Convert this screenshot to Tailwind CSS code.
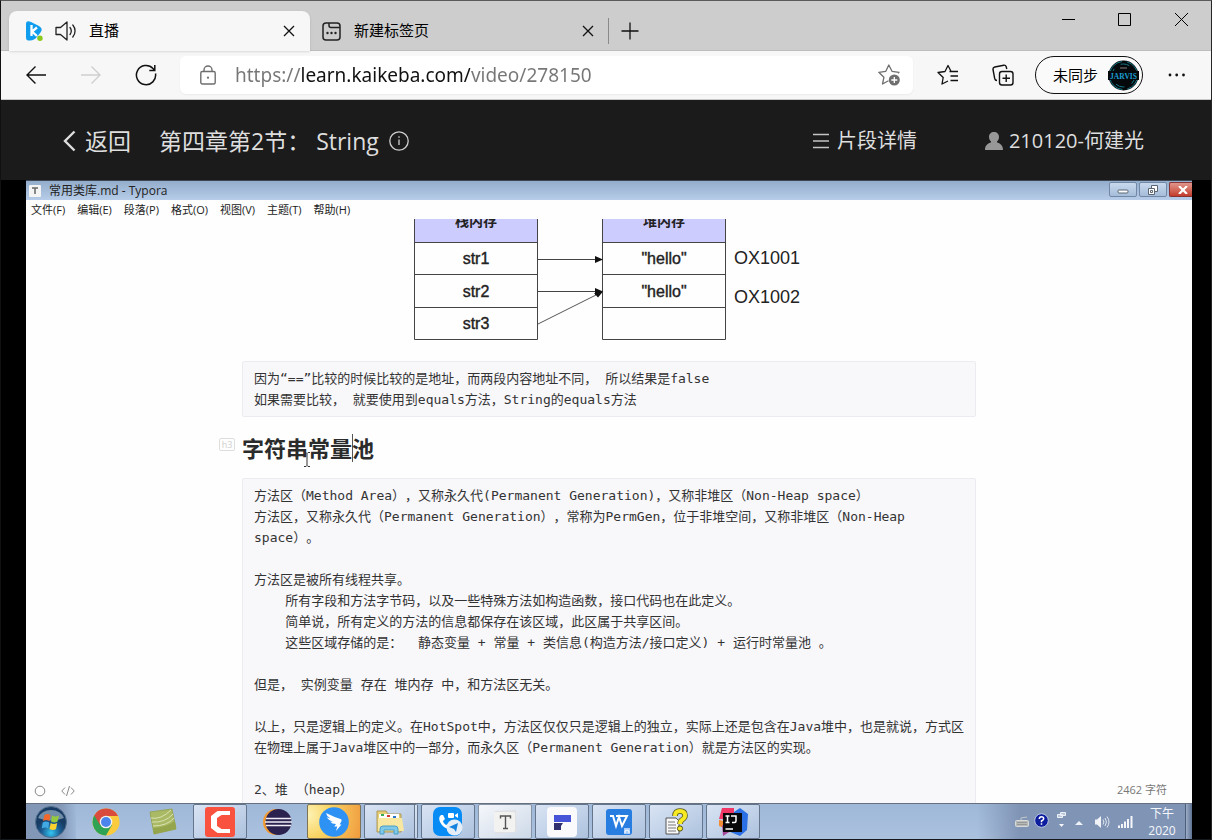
<!DOCTYPE html>
<html lang="zh-CN">
<head>
<meta charset="utf-8">
<title>直播</title>
<script src="https://cdn.jsdelivr.net/npm/@tailwindcss/browser@4"></script>
</head>
<body class="flex h-screen flex-col overflow-hidden border border-t-[#5b595b] border-r-[#262626] border-b-[#15181d] border-l-[#111] bg-black font-['Open_Sans','Noto_Sans_CJK_SC',sans-serif] text-black">

<!-- Tab strip -->
<header class="flex h-[50px] shrink-0 border-b border-[#bdbdbd] bg-[#cdcdcd]">
  <div class="relative mt-[10px] ml-2 flex h-10 w-[301px] shrink-0 items-center rounded-t-lg bg-[#f7f7f7] pr-[15px] pl-4 shadow-sm">
    <svg class="h-5 w-[18px]" viewBox="0 0 18 20"><path d="M1 3c0-3 2-3.300 5-2l7 3.500c4 2 4.500 4 2.500 7L12 16c-2 2-4 3.500-7 3.500S1 19 1 16z" fill="#109dee"/><path d="M6.500 4v11M12 6.500l-5 4 5 4.500" fill="none" stroke="#fff" stroke-width="2.300"/><circle cx="15" cy="17.300" r="2.700" fill="#8bc91c"/></svg>
    <svg class="ml-3 h-5 w-[22px]" viewBox="0 0 22 20" fill="none" stroke="#222" stroke-width="1.300" stroke-linejoin="round" stroke-linecap="round"><path d="M1 6.500h4.500L12 1v18l-6.500-5.500H1zM15 6.500c1.500 2 1.500 5 0 7M17.800 4c3 3.500 3 8.500 0 12"/></svg>
    <span class="ml-3 pb-[2px] text-[15px] leading-5">直播</span>
    <button aria-label="关闭直播" class="ml-auto"><svg class="size-3" viewBox="0 0 12 12" stroke="#111" stroke-width="1.300"><path d="M1 1l10 10M11 1L1 11"/></svg></button>
  </div>
  <div class="flex w-[298px] shrink-0 items-center border-r border-transparent pt-[11px] pr-[13px] pl-3">
    <svg class="size-[19px]" viewBox="0 0 19 19" fill="none" stroke="#222" stroke-width="1.500"><rect x="1" y="1" width="17" height="17" rx="3"/><path d="M7 1v2.500C7 5 7.500 5.500 9 5.500h9"/><g fill="#222" stroke="none"><circle cx="5.500" cy="11" r="1.200"/><circle cx="9.500" cy="11" r="1.200"/><circle cx="13.500" cy="11" r="1.200"/></g></svg>
    <span class="ml-[13px] pb-[2px] text-[15px] leading-5">新建标签页</span>
    <button aria-label="关闭新建标签页" class="ml-auto"><svg class="size-3" viewBox="0 0 12 12" stroke="#111" stroke-width="1.300"><path d="M1 1l10 10M11 1L1 11"/></svg></button>
  </div>
  <button aria-label="新建标签" class="mt-[17px] h-[26px] border-l border-[#8a8a8a] pl-3"><svg class="size-[18px]" viewBox="0 0 18 18" stroke="#111" stroke-width="1.300"><path d="M9 .5v17M.5 9h17"/></svg></button>
  <div class="ml-auto flex h-[37px] items-center">
    <button aria-label="最小化" class="flex w-14 justify-center"><svg class="size-[13px]" viewBox="0 0 13 13" stroke="#000"><path d="M0 6.500h13"/></svg></button>
    <button aria-label="最大化" class="flex w-14 justify-center"><svg class="size-[13px]" viewBox="0 0 13 13" fill="none" stroke="#000"><path d="M.5.500h12v12H.5z"/></svg></button>
    <button aria-label="关闭" class="flex w-[59px] justify-center"><svg class="size-[13px]" viewBox="0 0 13 13" stroke="#000"><path d="M0 0l13 13M13 0L0 13"/></svg></button>
  </div>
</header>

<!-- Navigation bar -->
<nav class="flex h-[49px] shrink-0 items-center border-b border-[#c9c9c9] bg-[#f7f7f7] px-[7px]">
  <button aria-label="后退" class="flex w-[55px] shrink-0 justify-center"><svg class="size-5" viewBox="0 0 20 20" fill="none" stroke="#111" stroke-width="1.400"><path d="M20 10H1M9.500 1.500L1 10l8.500 8.500"/></svg></button>
  <button aria-label="前进" class="flex w-[55px] shrink-0 justify-center"><svg class="size-5" viewBox="0 0 20 20" fill="none" stroke="#cfcfcf" stroke-width="1.400"><path d="M0 10h19M10.500 1.500L19 10l-8.500 8.500"/></svg></button>
  <button aria-label="刷新" class="flex w-[55px] shrink-0 justify-center"><svg class="size-[22px]" viewBox="0 0 22 22" fill="none" stroke="#111" stroke-width="1.500"><path d="M20.500 9.500A9.600 9.600 0 1 1 18 4.500l1.500 1.800M19.800 1v5.500h-5.500"/></svg></button>
  <div class="ml-[7px] flex h-[38px] min-w-0 flex-1 items-center rounded-md bg-white pr-[13px] pl-5 shadow-xs">
    <svg class="h-5 w-4 shrink-0" viewBox="0 0 16 20" fill="none" stroke="#6e6e6e" stroke-width="1.400"><rect x=".8" y="6.500" width="14.400" height="12.500" rx="1.500"/><path d="M4 6.500V5a4 4 0 0 1 8 0v1.500"/><circle cx="8" cy="12.700" r="1.100" fill="#6e6e6e" stroke="none"/></svg>
    <input aria-label="地址" value="https://learn.kaikeba.com/video/278150" class="ml-[19px] min-w-0 flex-1 bg-[linear-gradient(90deg,#767676_67px,#111_67px,#111_235px,#767676_235px)] bg-clip-text font-['Noto_Sans'] text-[19px] leading-7 text-transparent outline-none">
    <button aria-label="添加到收藏夹" class="shrink-0"><svg class="size-[22px]" viewBox="0 0 22 22" fill="none" stroke="#6e6e6e" stroke-width="1.300" stroke-linejoin="round"><path d="M20 9.200l1-.9-7-1L10.800 1 7.800 7.300l-7 1 5.100 5L4.500 20l6-3.200"/><circle cx="16.300" cy="16" r="5.500" fill="#6e6e6e" stroke="none"/><path d="M16.300 13v6M13.300 16h6" stroke="#fff"/></svg></button>
  </div>
  <button aria-label="收藏夹" class="ml-[7px] flex w-[55px] shrink-0 justify-center"><svg class="size-[22px]" viewBox="0 0 22 22" fill="none" stroke="#111" stroke-width="1.300" stroke-linejoin="round"><path d="M14 7.200L11 1.500l-3 6-7 1 5.200 5L5 20l6-3M12.500 7.500H21M13.500 12H21M13.500 16.500H21"/></svg></button>
  <button aria-label="集锦" class="flex w-[55px] shrink-0 justify-center"><svg class="size-[22px]" viewBox="0 0 22 22" fill="none" stroke="#111" stroke-width="1.400" stroke-linejoin="round"><rect x="7.500" y="7.500" width="13.500" height="13.500" rx="2.500"/><path d="M14.200 10.500v7.500M10.500 14.200H18M5 16.500c-1.500 0-2-.6-2.300-2L1 5.500C.8 4 1.300 3.300 2.800 3l9-1.800c1.400-.2 2 .3 2.400 1.600L14.800 5"/></svg></button>
  <button class="ml-[5px] flex h-[38px] w-[108px] shrink-0 items-center justify-between rounded-full border border-[#111] bg-[#fafafa] pr-[3px] pl-[17px] text-[15px]">未同步
    <svg class="size-[31px]" viewBox="0 0 31 31"><circle cx="15.500" cy="15.500" r="15" fill="#05090c"/><g fill="none" stroke="#147684"><circle cx="15.500" cy="15.500" r="14" stroke-dasharray="18 5"/><circle cx="15.500" cy="15.500" r="11.500" stroke-dasharray="9 8"/></g><path d="M0 11h31v9H0z" fill="#05090c"/><path d="M12 7h7v2h-7z" fill="#444"/><text x="15.500" y="18.500" text-anchor="middle" font-size="7.500" font-weight="700" font-family="Liberation Serif, serif" fill="#1b9fd0">JARVIS</text></svg>
  </button>
  <button aria-label="更多" class="ml-[6px] flex w-[55px] shrink-0 justify-center"><svg class="h-1 w-[18px]" viewBox="0 0 18 4" fill="#111"><circle cx="2" cy="2" r="1.400"/><circle cx="8.700" cy="2" r="1.400"/><circle cx="15.500" cy="2" r="1.400"/></svg></button>
</nav>

<!-- Course header -->
<section class="flex h-20 shrink-0 items-center bg-[#1b1b1b] pt-[2px] pr-[67px] pl-[62px] text-[20px] text-[#dedede]">
  <a href="#" class="flex items-center gap-[9px] text-[23px]"><svg class="h-[22px] w-[13px]" viewBox="0 0 13 22" fill="none" stroke="#dedede" stroke-width="2.400"><path d="M11.500 1.500L2 11l9.500 9.500"/></svg>返回</a>
  <h1 class="ml-7 text-[23px] whitespace-pre">第四章第2节： String</h1>
  <svg class="ml-[10px] size-5" viewBox="0 0 20 20" fill="none" stroke="#cfcfcf" stroke-width="1.300"><circle cx="10" cy="10" r="9.200"/><path d="M10 8.500V14M10 5.200v1.600"/></svg>
  <a href="#" class="ml-auto flex items-center gap-2"><svg class="size-4" viewBox="0 0 16 16" stroke="#c4c4c4" stroke-width="1.300"><path d="M0 1.500h16M0 8h16M0 14.500h16"/></svg>片段详情</a>
  <a href="#" class="ml-[68px] flex items-center gap-[6px]"><svg class="size-[18px]" viewBox="0 0 18 18" fill="#979797"><path d="M9 0c3 0 5 2 5 5 0 2-1 3.500-2 4.500v1c3 .8 6 2.500 6 7.500H0c0-5 3-6.700 6-7.500v-1C5 8.500 4 7 4 5c0-3 2-5 5-5z"/></svg>210120-何建光</a>
</section>

<!-- Lecture stream -->
<main class="mr-[19px] ml-[25px] flex min-h-0 flex-1 flex-col bg-[#fefefe] text-[#333]">
  <div class="flex h-5 shrink-0 items-center border-t border-[#3c4654] bg-linear-to-b from-[#93adcb] to-[#b7cde9] pl-[3px] text-[12px] text-[#222]">
    <svg class="size-3" viewBox="0 0 12 12"><rect width="12" height="12" rx="1" fill="#f4f4f4"/><path d="M3 3h6M6 3v6" stroke="#666" stroke-width="1.500"/></svg>
    <span class="ml-2 leading-4">常用类库.md - Typora</span>
    <div class="ml-auto flex h-full items-start gap-[2px] pt-px">
      <button aria-label="最小化窗口" class="flex h-[15px] w-7 items-center justify-center rounded-xs border border-[#7288a6] bg-linear-to-b from-[#c8d9ee] to-[#a5bdd9]"><svg class="h-2 w-3" viewBox="0 0 12 8"><rect x="1" y="4" width="10" height="3" rx="1" fill="#fff" stroke="#5b6675"/></svg></button>
      <button aria-label="还原窗口" class="flex h-[15px] w-7 items-center justify-center rounded-xs border border-[#7288a6] bg-linear-to-b from-[#c8d9ee] to-[#a5bdd9]"><svg class="h-[10px] w-3" viewBox="0 0 12 10" fill="#fff" stroke="#5b6675"><path d="M4.500.5h6v6h-6z"/><path d="M1.500 3.500h6v6h-6z"/><path d="M3.500 5.500h2v2h-2z"/></svg></button>
      <button aria-label="关闭窗口" class="flex h-[15px] w-[23px] items-center justify-center rounded-l-xs border border-r-0 border-[#8a3535] bg-linear-to-b from-[#e0958b] to-[#c23b2c] pl-1"><svg class="h-2 w-[10px]" viewBox="0 0 10 8" stroke="#fff" stroke-width="2.200"><path d="M1 0l8 8M9 0L1 8"/></svg></button>
    </div>
  </div>
  <div class="flex h-[19px] shrink-0 items-center gap-3 pl-[5px] text-[11px] leading-4 text-[#222]">
    <button>文件(F)</button><button>编辑(E)</button><button>段落(P)</button><button>格式(O)</button><button>视图(V)</button><button>主题(T)</button><button>帮助(H)</button>
  </div>

  <div class="relative min-h-0 flex-1 overflow-hidden">
    <article class="mx-auto w-[734px] max-w-full [text-spacing-trim:space-all]">
      <svg class="mx-auto block h-[122px] w-[392px]" viewBox="0 0 392 122" font-family="'Liberation Sans','Noto Sans CJK SC',sans-serif">
        <g fill="#ccf"><path d="M1 0h124v23H1zM189 0h124v23H189z"/></g>
        <path d="M1.500 0v120.500h123V0M1.500 23.500h123M1.500 55.500h123M1.500 88.500h123M189.500 0v120.500h123V0M189.500 23.500h123M189.500 55.500h123M189.500 88.500h123M125 40.500h57M125 72.500h57" fill="none" stroke="#444"/>
        <path d="M125 105l58-29" stroke="#555"/>
        <path d="M182 37l8 3.500-8 3.500zM182 69l8 3.500-8 3.500zM181 74l9-1.500-5 6z" fill="#111"/>
        <g font-size="16" text-anchor="middle" fill="#222" stroke="#222" stroke-width=".4"><text x="63" y="45">str1</text><text x="63" y="78">str2</text><text x="63" y="110">str3</text><text x="251" y="45">"hello"</text><text x="251" y="78">"hello"</text></g>
        <g font-size="14" font-weight="700" text-anchor="middle" fill="#222"><text x="63" y="7">栈内存</text><text x="251" y="7">堆内存</text></g>
        <g font-size="18" fill="#222"><text x="321" y="45">OX1001</text><text x="321" y="84">OX1002</text></g>
      </svg>
      <pre class="mt-5 rounded-xs border border-[#ececf0] bg-[#f8f7fa] px-[11px] py-[6px] font-['DejaVu_Sans_Mono','Noto_Sans_CJK_SC',monospace] text-[13px] leading-[21px]">因为“==”比较的时候比较的是地址，而两段内容地址不同， 所以结果是false
如果需要比较， 就要使用到equals方法，String的equals方法</pre>
      <h3 class="relative mt-[15px] flex h-8 items-center text-[22px] font-bold text-[#2b2b2b]">
        <span class="absolute top-[6px] -left-[23px] flex h-[13px] w-4 items-center justify-center rounded-xs border border-[#dedede] text-[9px] font-normal text-[#cfcfcf]">h3</span>
        字符串常量<span class="-mr-px h-7 w-px bg-[#555]"></span>池
        <svg class="absolute top-5 left-[61px] h-[15px] w-2" viewBox="0 0 8 15" fill="none" stroke="#333"><path d="M1 .5h2l1 1 1-1h2M4 1.500v12M1 14.500h2l1-1 1 1h2"/></svg>
      </h3>
      <pre class="mt-[14px] rounded-xs border border-[#ececf0] bg-[#f8f7fa] px-[11px] py-[6px] font-['DejaVu_Sans_Mono','Noto_Sans_CJK_SC',monospace] text-[13px] leading-[21px]">方法区（Method Area），又称永久代(Permanent Generation)，又称非堆区（Non-Heap space）
方法区，又称永久代（Permanent Generation），常称为PermGen，位于非堆空间，又称非堆区（Non-Heap
space）。

方法区是被所有线程共享。
    所有字段和方法字节码，以及一些特殊方法如构造函数，接口代码也在此定义。
    简单说，所有定义的方法的信息都保存在该区域，此区属于共享区间。
    这些区域存储的是：  静态变量 + 常量 + 类信息(构造方法/接口定义) + 运行时常量池 。

但是， 实例变量 存在 堆内存 中，和方法区无关。

以上，只是逻辑上的定义。在HotSpot中，方法区仅仅只是逻辑上的独立，实际上还是包含在Java堆中，也是就说，方式区
在物理上属于Java堆区中的一部分，而永久区（Permanent Generation）就是方法区的实现。

2、堆 （heap）
</pre>
    </article>
    <div class="absolute bottom-[6px] left-2 flex items-center gap-[15px]">
      <button aria-label="侧边栏"><svg class="size-3" viewBox="0 0 12 12" fill="none" stroke="#888"><circle cx="6" cy="6" r="4.800"/></svg></button>
      <button aria-label="源代码模式"><svg class="h-3 w-[14px]" viewBox="0 0 14 12" fill="none" stroke="#888"><path d="M4 2.500L.8 6 4 9.500M10 2.500L13.200 6 10 9.500M8.500 1l-3 10"/></svg></button>
    </div>
    <span class="absolute right-[25px] bottom-[5px] text-[11px] leading-4 text-[#777]">2462 字符</span>
  </div>

  <!-- Taskbar -->
  <footer class="flex h-9 shrink-0 border-t border-[#66717f] bg-linear-to-b from-[#9fb8d8] to-[#abc2df]">
    <div class="flex gap-[3px]">
      <button aria-label="开始" class="flex w-[50px] items-center justify-center bg-linear-to-r from-[#8397b7] from-70% to-[#9fb8d8]"><svg class="size-8" viewBox="0 0 32 32"><defs><radialGradient id="orb" cy=".85"><stop offset="0" stop-color="#34c6f1"/><stop offset=".6" stop-color="#1b5c92"/><stop offset="1" stop-color="#173b63"/></radialGradient></defs><circle cx="16" cy="16" r="15.500" fill="url(#orb)" stroke="#53718f"/><path d="M3 12a13.500 11 0 0 1 26 0q-13 5-26 0z" fill="#b9cfe0" opacity=".55"/><path d="M9.500 9q3-2 6 0l-1 6q-3-2-6.500 0z" fill="#f2672a"/><path d="M17 9.500q3 2 7 0l-1.500 6q-3 2-6.500 0z" fill="#96c93d"/><path d="M7.700 16.500q3-2 6.500 0l-1 6q-3-2-6.500 0z" fill="#41a9e4"/><path d="M15.700 17q3 2 6.500 0l-1.200 6q-3 2-6.500 0z" fill="#fdd22f"/></svg></button>
      <button aria-label="Chrome" class="flex w-[54px] items-center justify-center"><svg class="size-7" viewBox="0 0 28 28"><circle cx="14" cy="14" r="13.500" fill="#fbcb3e"/><path d="M14 14L2.300 7.300A13.500 13.500 0 0 0 14 27.500L20 17z" fill="#2fa354"/><path d="M2.300 7.300A13.500 13.500 0 0 1 26 8H14l-6 9z" fill="#d94c3d"/><circle cx="14" cy="14" r="6.300" fill="#f2f2f2"/><circle cx="14" cy="14" r="5" fill="#4a85ee"/></svg></button>
      <button aria-label="绿色图库" class="flex w-[54px] items-center justify-center"><svg class="size-7" viewBox="0 0 28 28"><path d="M1 4l22-3 4 20-22 5z" fill="#a9b964" stroke="#98a658"/><path d="M2 10q10 2 20-8M3 14q13 1 21-8M4 18q14 0 21-8" fill="none" stroke="#dbe3b4"/><path d="M4 20q14-1 22-7l1 8-22 5z" fill="#94a54c"/></svg></button>
      <button aria-label="Camtasia" class="flex w-[54px] items-center justify-center rounded-xs border border-[#65758c] bg-linear-to-br from-[#d9e4f4] to-[#adc2de]"><svg class="size-[30px]" viewBox="0 0 30 30"><rect width="30" height="30" rx="3" fill="#f9523e"/><path d="M25 4v4h-8.500L12 11v8l4.500 3H25v4H12.500L6 21V9l6.500-5z" fill="#fff"/></svg></button>
      <button aria-label="Eclipse" class="flex w-[54px] items-center justify-center"><svg class="size-[30px]" viewBox="0 0 30 30"><circle cx="14" cy="15" r="13" fill="#f29b32"/><circle cx="16.500" cy="15" r="13" fill="#2b2250"/><path d="M4 11.500h25M3 15h27M4 18.500h25" stroke="#f1eef8" stroke-width="1.600"/></svg></button>
      <button aria-label="钉钉" class="flex w-[54px] items-center justify-center rounded-xs border border-[#7e7257] bg-[radial-gradient(circle_at_0_30%,#fdf3b4,#f9d465_40%,#f09a3c)]"><svg class="size-[30px]" viewBox="0 0 30 30"><circle cx="15" cy="15" r="14.800" fill="#2e91f4"/><path d="M7 6q8 4 14.500 6c2 .8 1 2.500-1 5.500h2L17 24l1.300-4.500h-3L17 17q-4 0-6-2.500 2 .5 3 .2Q9 13 8 10q2 1.500 3 1.300Q7.500 9 7 6z" fill="#fff"/></svg></button>
      <button aria-label="资源管理器" class="flex w-[54px] items-center justify-center rounded-xs border border-r-4 border-double border-[#65758c] bg-linear-to-br from-[#d9e4f4] to-[#adc2de]"><svg class="size-[30px]" viewBox="0 0 30 30"><path d="M2 4h9l2 3h13v18H2z" fill="#e6ce72" stroke="#ab985a"/><path d="M4 7h20v4H4z" fill="#fff"/><path d="M6 7h3v2H6z" fill="#38a956"/><path d="M12 8h3v2h-3z" fill="#d23b2e"/><path d="M18 9h3v2h-3z" fill="#2875c9"/><path d="M3 11h24l2 13H3z" fill="#f7e7a0"/><path d="M5 27v-5q0-3 3-3h12q3 0 3 3v5h-4v-4H9v4z" fill="#7ec9e8" stroke="#4b9ec6"/></svg></button>
      <button aria-label="会议" class="flex w-[54px] items-center justify-center rounded-xs border border-[#65758c] bg-linear-to-br from-[#d9e4f4] to-[#adc2de]"><svg class="size-[30px]" viewBox="0 0 30 30"><rect width="29" height="29" rx="7" fill="#078cf5"/><path d="M8 8q-3 2-1 7 3 6 9 7l2-3-3-2-2 1q-3-2-3-4l2-2-2-4z" fill="#fff"/><rect x="15" y="6" width="6" height="5" rx="1" fill="#fff"/><path d="M22 8l3-2v5l-3-2z" fill="#fff"/><circle cx="21.500" cy="20.500" r="8" fill="#e5eef6"/><path d="M16 20l9-4-2 9-2-3z" fill="#1683df"/></svg></button>
      <button aria-label="Typora" class="flex w-[54px] items-center justify-center rounded-xs border border-[#8794a6] bg-linear-to-br from-[#f5f7fb] to-[#cdd9e8]"><svg class="size-7" viewBox="0 0 28 28"><path d="M4 3l21-1 1 22-22 2z" fill="#dfe1e4"/><rect x="3" y="4" width="21" height="20" rx="2" fill="#f2f2f1"/><path d="M9.500 10.500V8h10v2.500M14.500 8v12M12 20.500h5" fill="none" stroke="#555" stroke-width="1.400"/></svg></button>
      <button aria-label="飞书" class="flex w-[54px] items-center justify-center rounded-xs border border-[#65758c] bg-linear-to-br from-[#d9e4f4] to-[#adc2de]"><svg class="size-[30px]" viewBox="0 0 30 30"><rect width="30" height="30" rx="4" fill="#fafafd"/><path d="M7 8h17v7H7z" fill="#4854d8"/><path d="M7 16h9l-2 3v4H7z" fill="#30306f"/></svg></button>
      <button aria-label="WPS" class="flex w-[54px] items-center justify-center rounded-xs border border-[#65758c] bg-linear-to-br from-[#d9e4f4] to-[#adc2de]"><svg class="size-7" viewBox="0 0 28 28"><rect x="1" y="1" width="26" height="26" rx="3" fill="#287de1"/><path d="M5 8h3l3 10 3-9 3 9 5-10H11" fill="none" stroke="#fff" stroke-width="2"/><path d="M19 20h6v6h-6z" fill="#a9cdfa"/><path d="M20 25v-2l2-1 2 1v2" fill="none" stroke="#fff"/></svg></button>
      <button aria-label="帮助文档" class="flex w-[54px] items-center justify-center rounded-xs border border-[#65758c] bg-linear-to-br from-[#d9e4f4] to-[#adc2de]"><svg class="size-7" viewBox="0 0 28 28"><path d="M4 10h10l3 3v13H4z" fill="#f8f8f8" stroke="#555"/><path d="M6 14h7M6 17h8M6 20h8M6 23h8" stroke="#777"/><path d="M13 8q0-5 5-5t5 4.500q0 2.500-2.500 4T18 16" fill="none" stroke="#554f16" stroke-width="5.500"/><path d="M13 8q0-5 5-5t5 4.500q0 2.500-2.500 4T18 16" fill="none" stroke="#f5ea24" stroke-width="4"/><circle cx="18" cy="20.500" r="2.600" fill="#f5ea24" stroke="#554f16"/></svg></button>
      <button aria-label="IntelliJ IDEA" class="flex w-[54px] items-center justify-center rounded-xs border border-[#65758c] bg-linear-to-br from-[#d9e4f4] to-[#adc2de]"><svg class="size-[30px]" viewBox="0 0 30 30"><path d="M4 1h12v12L1 12z" fill="#f13766"/><path d="M1 13l5 1v7l-5-2z" fill="#f48b34"/><path d="M4 18l12 4-11 7z" fill="#a74a9e"/><path d="M16 5l6-4 8 6-1 16-7 6-12-5z" fill="#2b6fe4"/><path d="M5 6h19v19H5z" fill="#08080b"/><path d="M7.500 9h4M9.500 9v6.500M7.500 15.500h4M13 9h5v5q0 1.500-1.500 1.500H14M7.500 22h7.500" fill="none" stroke="#fff" stroke-width="1.500"/></svg></button>
    </div>
    <div class="ml-auto flex items-center bg-linear-to-r from-transparent to-[#8094b5] to-20% pl-[38px]">
      <svg class="h-3 w-[14px]" viewBox="0 0 14 12"><rect x=".5" y="4.500" width="13" height="6" rx="1" fill="#b7bab9" stroke="#d7dadb"/><path d="M2.500 6.500h9M2.500 8.500h9" stroke="#777" stroke-dasharray="1 1"/><path d="M6 4V2l6-1" fill="none" stroke="#c4c8ca"/></svg>
      <svg class="mb-[3px] ml-[5px] size-[15px]" viewBox="0 0 15 15"><circle cx="7.500" cy="7.500" r="6.800" fill="#0c1e9e" stroke="#b9c7e4"/><path d="M5.300 6q0-2.300 2.200-2.300T9.700 5.700Q9.700 6.800 7.500 8v1.200M7.500 10.200v1.600" fill="none" stroke="#fff" stroke-width="1.500"/></svg>
      <svg class="mb-[3px] ml-2 h-5 w-[9px]" viewBox="0 0 9 20"><path d="M3.500 2.500h5v3h-5zM.5 4.500h5v3h-5z" fill="#b8c6dc" stroke="#edf1f7"/><path d="M2 14h5l-2.500 3z" fill="#f5f7fa"/></svg>
      <svg class="ml-[9px] h-2 w-2" viewBox="0 0 8 8"><path d="M0 7l4-4 4 4z" fill="#eef2f8"/></svg>
      <svg class="ml-3 h-[14px] w-[15px]" viewBox="0 0 15 14" fill="#f1f3f6"><path d="M0 4.500h2L6 1v12L2 9.500H0z"/><path d="M8 4.500q1.800 2.500 0 5M10 3q3 4 0 8M12 1.500q4 5.500 0 11" fill="none" stroke="#e1e7ef"/></svg>
      <svg class="ml-2 h-3 w-[15px]" viewBox="0 0 15 12" fill="#f4f6f9"><path d="M0 9.500h2V12H0zM3 8h2v4H3zM6 5.500h2V12H6zM9 3h2v9H9zM12.500 0h2v12h-2z"/></svg>
      <div class="ml-[14px] flex w-[30px] flex-col items-center text-[12px] leading-[17px] text-[#f4f7fb]"><span>下午</span><span>2020</span></div>
      <button aria-label="显示桌面" class="ml-2 h-full w-[7px] border-l border-[#4e5f79] bg-linear-to-r from-[#9cadc8] to-[#5e7292]"></button>
    </div>
  </footer>
</main>
</body>
</html>
